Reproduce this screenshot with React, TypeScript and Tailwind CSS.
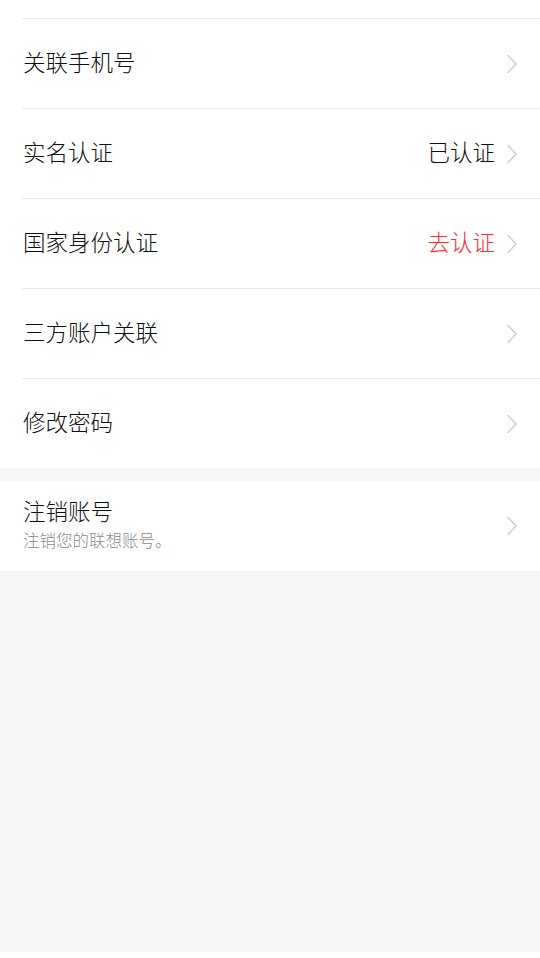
type Row = { label: string; value?: string; tone?: 'normal' | 'red' };

const rows: Row[] = [
  { label: '关联手机号' },
  { label: '实名认证', value: '已认证', tone: 'normal' },
  { label: '国家身份认证', value: '去认证', tone: 'red' },
  { label: '三方账户关联' },
  { label: '修改密码' },
];

function Chevron() {
  return (
    <svg width="12" height="20" viewBox="0 0 12 20" fill="none" className="shrink-0">
      <path d="M2 1.5 L10 10 L2 18.5" stroke="#cfcfcf" strokeWidth="1.5" strokeLinecap="round" strokeLinejoin="round" />
    </svg>
  );
}

export default function App() {
  return (
    <div
      className="flex min-h-[958px] flex-col bg-white text-[#0f0f0f]"
      style={{ fontFamily: '"Noto Sans CJK SC", "Noto Sans", sans-serif' }}
    >
      <section className="bg-white">
        <div className="h-[18px]" />
        <div className="ml-[22px]">
          {rows.map((row) => (
            <div key={row.label} className="flex h-[90px] items-center border-t border-[#e8e8e8] pr-[22px]">
              <span className="flex-1 pb-[5px] pl-px text-[22.5px] font-light leading-none">{row.label}</span>
              {row.value ? (
                <span
                  className={`mr-[11px] pb-[5px] text-[22.5px] font-light leading-none ${
                    row.tone === 'red' ? 'text-[#ff2d2d]' : 'text-[#0f0f0f]'
                  }`}
                >
                  {row.value}
                </span>
              ) : null}
              <Chevron />
            </div>
          ))}
        </div>
      </section>

      <div className="h-[13px] bg-[#f5f5f5]" />

      <section className="flex h-[90px] items-center bg-white pl-[23px] pr-[22px]">
        <div className="flex-1 pb-[6px]">
          <p className="text-[22.5px] font-light leading-[30px]">注销账号</p>
          <p className="mt-[4px] text-[16.5px] font-light leading-[22px] text-[#8a8a8a]">注销您的联想账号。</p>
        </div>
        <Chevron />
      </section>

      <div className="h-[381px] bg-[#f5f5f5]" />
      <div className="flex-1 bg-white" />
    </div>
  );
}
